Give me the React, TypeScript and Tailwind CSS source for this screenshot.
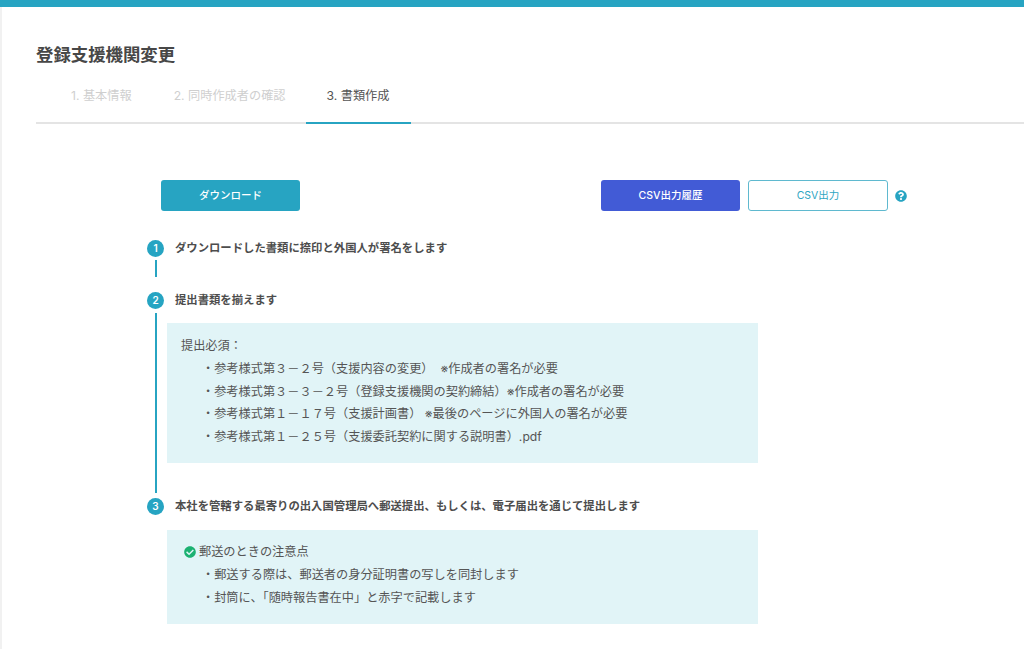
import { FaCheckCircle, FaQuestionCircle } from "react-icons/fa";

const font = "font-['Inter','Noto_Sans_CJK_JP',sans-serif]";

const StepCircle = ({ n }: { n: number }) => (
  <div className="w-[17px] h-[17px] rounded-full bg-[#26a4c2] text-white text-[10px] font-semibold flex items-center justify-center shrink-0">
    {n}
  </div>
);

const Heading = ({ children }: { children: string }) => (
  <div className="h-[17px] pl-[8px] flex items-center text-[11.35px] font-bold text-[#4d4d4d] whitespace-nowrap">
    {children}
  </div>
);

const docs = [
  "・参考様式第３－２号（支援内容の変更）\u00a0 ※作成者の署名が必要",
  "・参考様式第３－３－２号（登録支援機関の契約締結）※作成者の署名が必要",
  "・参考様式第１－１７号（支援計画書） ※最後のページに外国人の署名が必要",
  "・参考様式第１－２５号（支援委託契約に関する説明書）.pdf",
];

export default function App() {
  return (
    <div className={`${font} w-[1024px] h-[649px] overflow-hidden bg-white flex flex-col`}>
      <div className="h-[7px] bg-[#27a4c2] shrink-0" />
      <div className="flex-1 border-l-2 border-[#f1f1f1] pl-[34px]">
        <h1 className="mt-[36px] h-[24px] flex items-center text-[17.4px] font-bold text-[#474747]">
          登録支援機関変更
        </h1>

        <div className="mt-[14px] flex pl-[14px] border-b-2 border-[#e4e4e4] h-[43px] text-[12.2px] leading-[18px]">
          <div className="pl-[21px] pr-[21px] pt-[6px] text-[#cfcfcf]">1. 基本情報</div>
          <div className="pl-[21px] pr-[20px] pt-[6px] text-[#cfcfcf]">2. 同時作成者の確認</div>
          <div className="w-[105px] text-center pt-[6px] text-[#555555] h-[43px] border-b-2 border-[#27a4c2]">3. 書類作成</div>
        </div>

        <div className="mt-[56px] ml-[125px] w-[747px] flex items-center text-[10.5px]">
          <button className="w-[139px] h-[31px] rounded-[3px] bg-[#27a4c2] text-white font-medium">ダウンロード</button>
          <button className="ml-[301px] w-[139px] h-[31px] rounded-[3px] bg-[#425bd6] text-white font-medium">CSV出力履歴</button>
          <button className="ml-[8px] w-[140px] h-[31px] rounded-[3px] bg-white border border-[#5fb9cf] text-[#2fa6c2]">CSV出力</button>
          <FaQuestionCircle className="ml-[7px] text-[12px] text-[#27a4c2]" />
        </div>

        <div className="mt-[29px] ml-[111px] flex flex-col">
          <div className="flex gap-[3px] h-[52px]">
            <div className="w-[17px] flex flex-col items-center">
              <StepCircle n={1} />
              <div className="mt-[3px] w-[2px] h-[17px] bg-[#27a4c2]" />
            </div>
            <Heading>ダウンロードした書類に捺印と外国人が署名をします</Heading>
          </div>

          <div className="flex gap-[3px] h-[206px]">
            <div className="w-[17px] flex flex-col items-center">
              <StepCircle n={2} />
              <div className="mt-[4px] mb-[5px] w-[2px] flex-1 bg-[#27a4c2]" />
            </div>
            <div>
              <Heading>提出書類を揃えます</Heading>
              <div className="mt-[14px] w-[591px] h-[140px] bg-[#e1f4f7] pt-[12px] pl-[14px] text-[12.2px] leading-[22.8px] text-[#555555]">
                <div>提出必須：</div>
                {docs.map((d) => (
                  <div key={d} className="pl-[21px] whitespace-nowrap">{d}</div>
                ))}
              </div>
            </div>
          </div>

          <div className="flex gap-[3px]">
            <div className="w-[17px]">
              <StepCircle n={3} />
            </div>
            <div>
              <Heading>本社を管轄する最寄りの出入国管理局へ郵送提出、もしくは、電子届出を通じて提出します</Heading>
              <div className="mt-[15px] w-[591px] h-[94px] bg-[#e1f4f7] pt-[11px] pl-[17px] text-[12.2px] leading-[22.8px] text-[#555555]">
                <div className="flex items-center gap-[3px]">
                  <FaCheckCircle className="text-[12px] text-[#1bb171]" />
                  <span>郵送のときの注意点</span>
                </div>
                <div className="pl-[18px]">・郵送する際は、郵送者の身分証明書の写しを同封します</div>
                <div className="pl-[18px]">・封筒に、「随時報告書在中」と赤字で記載します</div>
              </div>
            </div>
          </div>
        </div>
      </div>
    </div>
  );
}
